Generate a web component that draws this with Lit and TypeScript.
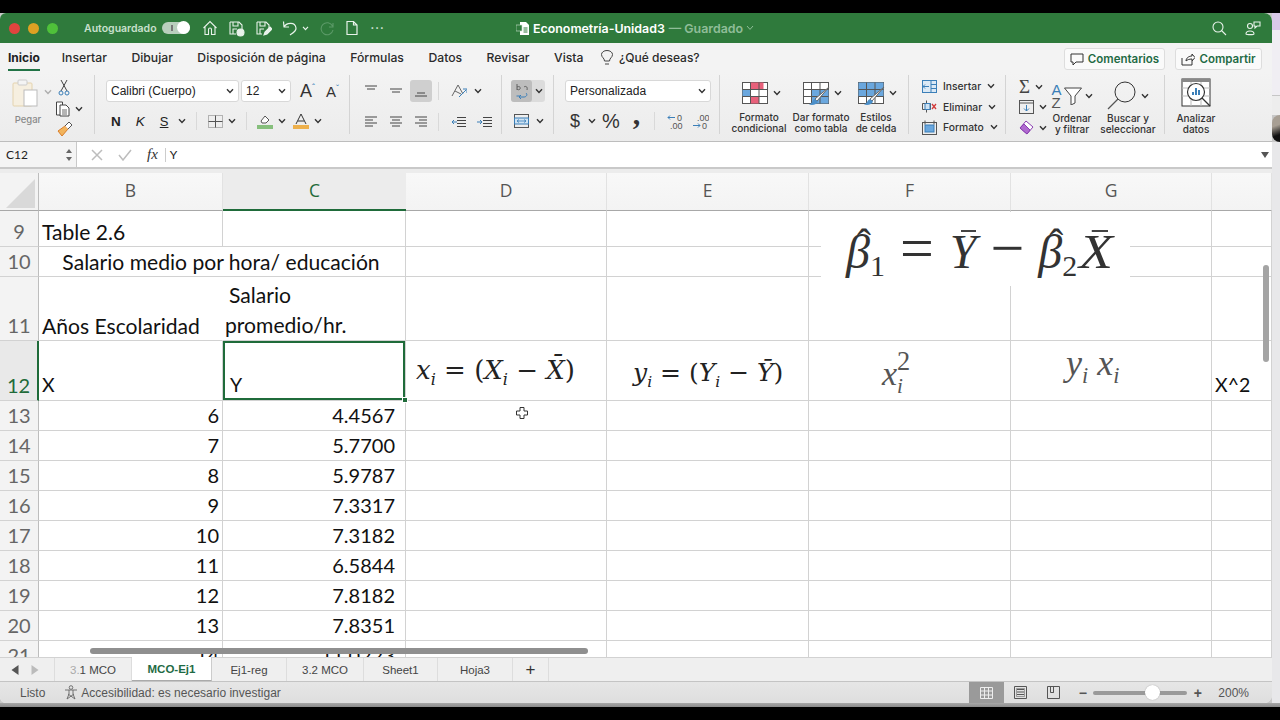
import { LitElement, html, css, svg } from "lit";
import { customElement } from "lit/decorators.js";

const chev = html`<svg class="chev" viewBox="0 0 8 6" width="8" height="6"><path d="M1 1.2 4 4.4 7 1.2" fill="none" stroke="#333" stroke-width="1.4"/></svg>`;
const ic = (w: number, h: number, body: unknown, vb?: string) =>
  html`<svg class="ic" width=${w} height=${h} viewBox=${vb ?? `0 0 ${w} ${h}`} fill="none" stroke="#444" stroke-width="1">${body}</svg>`;

const tableIcon = (fills: unknown, brush = false) => ic(28, 24, svg`
  <rect x="1.5" y="1.5" width="25" height="21" fill="#fff" stroke="#555"/>
  ${fills}
  <path d="M1.5 8.5h25M1.5 15.5h25M9.5 1.5v21M18 1.5v21" stroke="#555"/>
  ${brush ? svg`<path d="M27 6 15 20l-2-2Z" fill="#fff" stroke="#666"/><path d="M13 18c-3 1-2 4-6 5.5 4 1 8 0 9-3Z" fill="#4b8fc9" stroke="none"/>` : ""}
`);

@customElement("app-root")
export class AppRoot extends LitElement {
  static styles = css`
    :host { display: block; width: 1280px; height: 720px; background: #000; overflow: hidden; font-family: "Inter", "Liberation Sans", sans-serif; }
    svg { flex: none; display: block; }
    .stage { display: flex; flex-direction: column; height: 720px; padding: 13px 0; box-sizing: border-box; }
    .desk { flex: 1; min-height: 0; display: flex; background: #c8c8c8; }
    .foot { height: 4px; flex: none; background: linear-gradient(#a8a8a8, #8a8a8a); }
    .window { width: 1272px; display: flex; flex-direction: column; background: #f1f1f1; border-radius: 6px 8px 8px 6px; overflow: hidden; flex: none; }
    .strip { flex: 1; display: flex; flex-direction: column; }
    .s1 { height: 17px; background: #d9c9e8; }
    .s2 { height: 65px; background: #f0eef3; border-bottom: 1px solid #c6c6c6; }
    .s2b { height: 19px; background: #ededed; }
    .s3 { height: 27px; background: linear-gradient(160deg, #a89f94 40%, #111 75%); border-radius: 12px 0 0 12px; }
    .s4 { flex: 1; background: #e8e8ea; }

    .title { height: 30px; flex: none; background: #2f7a3c; color: #fff; display: flex; align-items: center; position: relative; }
    .lights { display: flex; gap: 8px; margin-left: 9px; }
    .lights i { width: 11px; height: 11px; border-radius: 50%; display: block; }
    .red { background: #e0443e; } .yellow { background: #dea123; } .green { background: #4fc13a; }
    .auto { margin-left: 26px; color: #c9e0cd; font-weight: 600; font-size: 10.5px; }
    .toggle { width: 28px; height: 12px; border-radius: 7px; background: #b9cfbd; margin-left: 5px; position: relative; display: flex; align-items: center; }
    .toggle::before { content: ""; width: 2px; height: 6px; background: #777; margin-left: 9px; }
    .toggle::after { content: ""; position: absolute; right: 0; top: -1px; width: 13px; height: 13px; border-radius: 50%; background: #fff; }
    .qat { display: flex; align-items: center; gap: 10px; margin-left: 12px; }
    .qat .small { margin-left: -6px; }
    .dots { letter-spacing: 1px; font-weight: 700; font-size: 11px; margin-left: 2px; color: #dcebdf; }
    .doc { position: absolute; left: 516px; top: 0; height: 30px; display: flex; align-items: center; gap: 3px; font-size: 12.4px; font-weight: 600; white-space: nowrap; }
    .doc span { color: #8fbd98; margin-left: 1px; }
    .tright { margin-left: auto; display: flex; gap: 18px; margin-right: 11px; align-items: center; }

    .tabs { height: 29px; flex: none; display: flex; align-items: center; font-size: 12.2px; color: #2b2b2b; font-weight: 500; padding-left: 8px; background: #f3f3f3; }
    .tab { margin-right: 24.5px; position: relative; white-space: nowrap; }
    .tab.on { font-weight: 700; color: #222; margin-right: 22px; font-size: 12px; }
    .tab.on::after { content: ""; position: absolute; left: 0; right: 0; bottom: -6px; height: 2px; background: #217346; }
    .tell { display: flex; align-items: center; gap: 5px; margin-left: -8px; font-size: 12px; }
    .actions { margin-left: auto; display: flex; gap: 10px; margin-right: 10px; margin-top: 3px; }
    .act { height: 22px; box-sizing: border-box; background: #fafafa; border: 1px solid #ddd; border-radius: 3px; display: flex; align-items: center; justify-content: center; gap: 4px; color: #1f6b45; font-weight: 600; font-size: 11.5px; }
    .act.a1 { width: 101px; } .act.a2 { width: 87px; }

    .ribbon { height: 70px; flex: none; display: flex; background: linear-gradient(#f3f3f3, #ececec); border-bottom: 1px solid #bdbdbd; box-sizing: border-box; padding-top: 3px; font-size: 10px; color: #333; }
    .g { flex: none; box-sizing: border-box; border-right: 1px solid #d4d4d4; margin-bottom: 7px; display: flex; }
    .col { display: flex; flex-direction: column; flex: none; }
    .col > * { flex: none; }
    .r { display: flex; align-items: center; flex: none; }
    .box { background: #fff; border: 1px solid #d8d8d8; border-radius: 3px; height: 22px; box-sizing: border-box; display: flex; align-items: center; justify-content: space-between; padding: 0 4px; font-size: 12px; font-family: "Liberation Sans", sans-serif; color: #222; }
    .sep { width: 1px; height: 18px; background: #d9d9d9; flex: none; }
    .lbl { text-align: center; line-height: 11px; font-size: 10px; font-weight: 500; color: #333; white-space: nowrap; }
    .lg { display: flex; flex-direction: column; align-items: center; flex: none; }
    .lg > * { flex: none; }
    .fb { font-size: 13.5px; font-weight: 700; font-family: "Liberation Sans", sans-serif; color: #222; }
    .fb.i { font-weight: 400; font-style: italic; }
    .fb.u { font-weight: 400; text-decoration: underline; font-size: 13px; }

    /* clipboard */
    .g-clip { width: 95px; }
    .paste { margin: 4px 0 0 11px; width: 30px; }
    .paste .lbl { color: #8a8a8a; margin: 7px 0 0 4px; font-size: 9.5px; }
    .chev-faint { margin: 14px 0 0 3px; opacity: .35; }
    .clip-col { margin: 2px 0 0 3px; }
    .scis { height: 21px; margin-left: 3px; display: flex; align-items: center; }
    .copy { height: 21px; gap: 4px; }
    .brush { height: 20px; margin-left: 1px; display: flex; align-items: center; }

    /* font */
    .g-font { width: 255px; flex-direction: column; padding: 5px 0 0 11px; }
    .font-top { gap: 2px; }
    .b-font { width: 133px; } .b-size { width: 50px; }
    .grow { font: 400 18px "Liberation Sans", sans-serif; margin-left: 7px; color: #333; }
    .shrink { font: 400 15px "Liberation Sans", sans-serif; margin-left: 9px; color: #333; }
    .grow sup, .shrink sup { font-size: 9px; line-height: 0; color: #3b7fb8; }
    .font-bot { margin-top: 8px; height: 22px; }
    .f-n { margin-left: 5px; } .f-k { margin-left: 15px; } .f-s { margin-left: 15px; }
    .f-c1 { margin-left: 10px; }
    .f-sep1 { margin: 0 11px 0 10px; }
    .f-c2 { margin-left: 5px; }
    .f-sep2 { margin: 0 10px 0 10px; }
    .f-c3 { margin-left: 5px; } .f-a { margin-left: 7px; } .f-c4 { margin-left: 5px; }

    /* alignment */
    .g-align { width: 152px; flex-direction: column; padding: 5px 0 0 10px; }
    .al { display: flex; width: 22px; height: 18px; align-items: center; justify-content: center; }
    .al.sel { height: 22px; background: #cfcfcf; border-radius: 3px; }
    .al-r1 { height: 22px; gap: 3px; }
    .al-r2 { height: 22px; gap: 3px; margin-top: 9px; }
    .al-sep { margin: 0 10px 0 3px; }
    .al-sep1 { margin: 0 7px 0 3px; }
    .al-c { margin-left: 4px; }
    .al-ind { margin-left: 7px; }

    /* wrap */
    .g-wrap { width: 52px; flex-direction: column; padding: 5px 0 0 9px; }
    .wrapbtn { height: 22px; width: 34px; background: #dcdcdc; border-radius: 3px; }
    .wrapsel { display: flex; width: 21px; height: 22px; align-items: center; justify-content: center; background: #bdbdbd; border-radius: 3px; }
    .wrapbtn .chev { margin-left: 3px; }
    .merge { height: 22px; margin-top: 8px; margin-left: 3px; gap: 7px; }

    /* number */
    .g-num { width: 166px; flex-direction: column; padding: 5px 0 0 11px; }
    .b-num { width: 146px; }
    .num-r { height: 24px; margin-top: 7px; }
    .dollar { font: 400 18px "Liberation Sans", sans-serif; margin-left: 5px; color: #333; }
    .n-c { margin-left: 8px; }
    .pct-b { font: 400 20px "Liberation Sans", sans-serif; margin-left: 6px; color: #333; }
    .comma { font: 700 30px/24px "Liberation Serif", serif; margin-left: 13px; color: #333; height: 24px; overflow: visible; position: relative; top: -7px; }
    .n-sep { margin: 0 12px 0 14px; }
    .dec2 { margin-left: 8px; }
    .dtext { font-family: "Liberation Sans", sans-serif; font-size: 9px; fill: #555; stroke: none; }

    /* styles */
    .g-sty { width: 189px; }
    .sty { padding-top: 6px; }
    .sty .lbl { margin-top: 7px; }
    .sty1 { width: 62px; margin-left: 8px; } .sty2 { width: 62px; } .sty3 { width: 48px; }
    .sty .r { gap: 4px; }
    .sty1 .r { margin-left: 4px; } .sty2 .r, .sty3 .r { margin-left: 2px; }

    /* cells */
    .g-cells { width: 97px; flex-direction: column; padding: 1px 0 0 13px; }
    .cell-item { height: 20.5px; gap: 6px; font-size: 10.3px; font-weight: 500; }

    /* edit */
    .g-edit { width: 159px; }
    .e-col { margin: 3px 0 0 13px; gap: 3.5px; width: 29px; }
    .e-i { gap: 5px; height: 17px; }
    .sigma { font: 400 19px "Liberation Serif", serif; color: #444; }
    .e-sort { width: 48px; margin-top: 3px; }
    .e-find { width: 58px; margin: 3px 0 0 3px; }
    .e-top { height: 35px; }
    .e-sort .e-top { gap: 2px; } .e-find .e-top { gap: 4px; }
    .e-sort .e-top .chev { margin-left: 1px; }
    .az { font: 400 15px/13px "Liberation Sans", sans-serif; color: #555; }
    .az i { color: #3b7fb8; font-style: normal; }

    /* analyze */
    .g-an { width: 60px; border: none; padding: 3px 0 0 12px; }
    .an { width: 38px; }
    .an .lbl { margin-top: 5px; }

    .formula { height: 25px; flex: none; background: #fff; display: flex; align-items: center; border-bottom: 2px solid #c9c9c9; font-family: "Lato", sans-serif; font-size: 12px; color: #222; }
    .ref { width: 77px; height: 100%; box-sizing: border-box; border-right: 1px solid #c9c9c9; display: flex; align-items: center; justify-content: space-between; padding: 0 3px 0 6px; background: #f4f4f4; }
    .x { margin-left: 14px; } .v-i { margin-left: 15px; }
    .fx { font-family: "Liberation Serif", serif; font-style: italic; font-size: 15px; color: #333; margin-left: 15px; }
    .fxsep { width: 1px; height: 14px; background: #ccc; margin: 0 4px 0 7px; }
    .fdrop { margin-left: auto; margin-right: 3px; }
    .band { height: 4px; flex: none; background: #ececec; }

    .sheet { flex: 1; min-height: 0; position: relative; background: #fff; overflow: hidden; font-family: "Lato", "Carlito", sans-serif; color: #111; }
    .row { display: grid; grid-template-columns: 39px 184px 183px 201px 202px 202px 201px 60px; }
    .h36 { height: 36px; } .h30 { height: 30px; } .h64 { height: 64px; } .h60 { height: 60px; }
    .row > div { border-right: 1px solid #d2d2d2; border-bottom: 1px solid #d2d2d2; box-sizing: border-box; display: flex; align-items: flex-end; padding: 0 3px 1px; font-size: 21.1px; line-height: 26px; white-space: nowrap; min-width: 0; }
    .row .rh { background: #f3f3f3; color: #666; justify-content: center; padding: 0 0 2px; border-right: 1px solid #bdbdbd; font-size: 20px; }
    .row .num { justify-content: flex-end; padding: 0 10px 2px 3px; font-size: 20px; }
    .row .num.b { padding-right: 3px; }
    .row .tiny { font-size: 19.5px; padding-bottom: 2px; }
    .head { height: 38px; background: linear-gradient(#f8f8f8, #f3f3f3); }
    .head > div { align-items: center !important; justify-content: center; padding: 0 0 3px !important; font-family: "Open Sans", sans-serif; font-size: 17.5px !important; color: #555; border-right-color: #e2e2e2 !important; border-bottom: 1px solid #a8a8a8 !important; }
    .head .corner { background: #f3f3f3; border-right: 1px solid #bdbdbd !important; padding: 0 !important; }
    .head .cur { background: #ececec; color: #1f6b3a; border-bottom: 2px solid #1f6b3a !important; border-right: none !important; }
    .row .rh.on { color: #1f6b3a; background: #e9e9e9; border-right: 2px solid #1f6b3a; }
    .row .cursel { box-shadow: inset 0 0 0 2px #1f6b3a; position: relative; overflow: visible; padding-left: 7px; padding-bottom: 2px; font-size: 19.5px; }
    .handle { position: absolute; right: -3px; bottom: -3px; background: #1f6b3a; border: 1px solid #fff; width: 4px; height: 4px; z-index: 2; }
    .nob { border-right-color: transparent !important; }
    .merged { grid-column: span 2; justify-content: center; padding-right: 5px !important; }
    .row .two { flex-direction: column; align-items: flex-start; justify-content: flex-end; line-height: 30px; padding: 0 0 0 2px; }
    .two span:first-child { padding-left: 4px; }

    .math { position: absolute; font-family: "DejaVu Serif", serif; color: #222; white-space: nowrap; font-style: italic; }
    .math sub { font-size: 62%; line-height: 0; }
    .up { font-style: normal; }
    .m1 { left: 416px; top: 182px; font-size: 26px; }
    .m2 { left: 633px; top: 185px; font-size: 25px; }
    .m3, .m4 { font-family: "Liberation Serif", serif; color: #555; }
    .m3 { left: 882px; top: 176px; font-size: 34px; display: flex; align-items: center; }
    .stack { display: flex; flex-direction: column; font-size: 62%; line-height: 25px; margin-left: 0; }
    .stack .up { font-size: 125%; }
    .m4 { left: 1066px; top: 169px; font-size: 36px; }
    .pic { position: absolute; left: 821px; top: 39px; width: 309px; height: 74px; box-sizing: border-box; padding-left: 25px; background: #fff; display: flex; align-items: baseline; font-family: "Liberation Serif", serif; font-style: italic; font-size: 48px; color: #333; white-space: nowrap; line-height: 72px; }
    .pic sub { font-size: 30px; line-height: 0; font-style: normal; vertical-align: baseline; position: relative; top: 8px; }
    .op { font-style: normal; font-size: 60px; }
    .eq { margin-left: 15px; } .mi { margin-left: 14px; } .yb { margin-left: 16px; } .b2 { margin-left: 14px; } .xb { margin-left: 2px; transform: scaleX(1.16); transform-origin: left center; }
    .hat { position: relative; display: inline-block; }
    .caret::before { content: "ˆ"; font-style: normal; position: absolute; left: 11px; top: -8px; font-size: 42px; }
    .barred::before { content: ""; position: absolute; left: 11px; top: 14px; width: 15px; height: 2px; background: #444; }
    .xb.barred::before { left: 11px; width: 14px; }
    .hscroll { position: absolute; left: 90px; top: 475px; width: 498px; height: 6px; border-radius: 3px; background: #8f8f8f; }
    .vscroll { position: absolute; left: 1263px; top: 92px; width: 6px; height: 97px; border-radius: 3px; background: #a4a4a4; }
    .cursor { position: absolute; left: 516px; top: 234px; }

    .sheets { height: 24px; flex: none; background: #efefef; display: flex; font-size: 11.5px; color: #444; border-top: 1px solid #d2d2d2; box-sizing: border-box; font-family: "Liberation Sans", sans-serif; }
    .nav { width: 55px; flex: none; display: flex; align-items: center; gap: 12px; padding-left: 11px; box-sizing: border-box; border-right: 1px solid #ddd; }
    .st { display: flex; align-items: center; justify-content: center; border-right: 1px solid #ddd; flex: none; box-sizing: border-box; }
    .st.on { background: #fff; color: #1f6b45; font-weight: 700; border-bottom: 1px solid #aaa; margin-top: -1px; border-right: 1px solid #ccc; }
    .st.plus { font-size: 17px; color: #333; }
    .faint { color: #aaa; }
    .status { height: 22px; flex: none; background: linear-gradient(#e6e6e6, #dedede); border-top: 1px solid #c4c4c4; box-sizing: border-box; display: flex; align-items: center; font-size: 12px; color: #555; padding-left: 20px; font-family: "Liberation Sans", sans-serif; }
    .acc { display: flex; align-items: center; gap: 3px; margin-left: 19px; }
    .views { margin-left: auto; display: flex; align-items: center; height: 100%; margin-right: 23px; }
    .v { width: 33px; height: 100%; display: flex; align-items: center; justify-content: center; }
    .v.on { background: #9a9a9a; width: 35px; margin-right: 0; }
    .slider { width: 94px; height: 4px; border-radius: 2px; background: #999; position: relative; margin: 0 6px; }
    .slider::after { content: ""; position: absolute; left: 52px; top: -6px; width: 15px; height: 15px; border-radius: 50%; background: #fff; box-shadow: 0 0 1px #888; }
    .pm { font-size: 14px; font-weight: 700; color: #555; width: 9px; text-align: center; }
    .pm.minus { margin-left: 8px; }
    .pct { margin-left: 16px; color: #555; }
  `;

  private qat() {
    const w = "#e8f2ea";
    return html`<div class="qat">
      <svg width="16" height="16" viewBox="0 0 16 16" fill="none" stroke=${w} stroke-width="1.1"><path d="M1.5 8 8 1.5 14.5 8M3 7v7.5h3.5V9.5a1.5 1.5 0 0 1 3 0v5H13V7"/></svg>
      <svg width="17" height="17" viewBox="0 0 17 17" fill="none" stroke=${w} stroke-width="1.1"><path d="M2 2h9l3 3v4M2 2v12h6M5 2v4h5V2M5 14V9h4"/><circle cx="12.5" cy="12.5" r="3.5" fill=${w}/></svg>
      <svg width="17" height="17" viewBox="0 0 17 17" fill="none" stroke=${w} stroke-width="1.1"><path d="M2 2h9l3 3v3M2 2v12h5M5 2v4h5V2M5 14V9h4"/><path d="M9 15l1-3 5-5 2 2-5 5Z" fill=${w}/></svg>
      <svg width="16" height="16" viewBox="0 0 16 16" fill="none" stroke=${w} stroke-width="1.2"><path d="M2 7 1.5 1.5M1.5 7H7M2 7c2-4 11-6 12 1 .4 3-3 5-6 7"/></svg>
      <svg class="small" width="7" height="5" viewBox="0 0 8 6"><path d="M1 1 4 4.4 7 1" fill="none" stroke=${w} stroke-width="1.4"/></svg>
      <svg width="16" height="16" viewBox="0 0 16 16" fill="none" stroke="#5c9a68" stroke-width="1.1"><path d="M14 3v4h-4M13.5 6A6 6 0 1 0 14 10"/></svg>
      <svg width="14" height="16" viewBox="0 0 14 16" fill="none" stroke=${w} stroke-width="1.2"><path d="M2 1.5h6.5l3.5 3.5v9.5H2ZM8.5 1.5V5H12"/></svg>
      <span class="dots">···</span>
    </div>`;
  }

  private clipboard() {
    return html`<div class="g g-clip">
      <div class="lg paste">
        ${ic(28, 28, svg`<rect x="1" y="4" width="19" height="23" rx="1" fill="#f6efe0" stroke="#e4d3ae"/><rect x="6" y="1" width="9" height="5" rx="1" fill="#f4f4f4" stroke="#ccc"/><rect x="12" y="11" width="13" height="16" fill="#fff" stroke="#bbb"/>`)}
        <span class="lbl">Pegar</span>
      </div>
      <span class="chev-faint">${chev}</span>
      <div class="col clip-col">
        <div class="scis">${ic(12, 17, svg`<path d="M3 1l6 11M9 1 3 12" stroke="#444"/><circle cx="3" cy="14" r="2" stroke="#3b7fb8"/><circle cx="9" cy="14" r="2" stroke="#3b7fb8"/>`)}</div>
        <div class="r copy">${ic(16, 16, svg`<path d="M1.5 1h6v13h-6Z" fill="#fff"/><path d="M5 4h6l3 3v8H5Z" fill="#fff"/><path d="M7 9h5M7 11h5M7 13h5" stroke-width=".8"/>`)}${chev}</div>
        <div class="brush">${ic(17, 17, svg`<path d="M2 10l7-5 3 3-6 7Z" fill="#f2b45c" stroke="#d97d2a"/><path d="M9 5l4-4 3 3-4 4" fill="#fff" stroke="#555"/>`)}</div>
      </div>
    </div>`;
  }

  private font() {
    return html`<div class="g g-font">
      <div class="r font-top">
        <div class="box b-font">Calibri (Cuerpo)${chev}</div>
        <div class="box b-size">12${chev}</div>
        <span class="grow">A<sup>ˆ</sup></span>
        <span class="shrink">A<sup>ˇ</sup></span>
      </div>
      <div class="r font-bot">
        <span class="fb f-n">N</span>
        <span class="fb i f-k">K</span>
        <span class="fb u f-s">S</span>
        <span class="f-c1">${chev}</span>
        <div class="sep f-sep1"></div>
        ${ic(15, 15, svg`<rect x=".5" y="1.5" width="14" height="12" stroke="#777" stroke-dasharray="1 1"/><path d="M7.5 1.5v12M.5 7.5h14" stroke="#555"/>`)}
        <span class="f-c2">${chev}</span>
        <div class="sep f-sep2"></div>
        ${ic(16, 17, svg`<path d="M4 8l4-5 4 4-3 3H5Z" fill="#fff" stroke="#555"/><rect y="12" width="16" height="4" fill="#86bf7c" stroke="none"/>`)}
        <span class="f-c3">${chev}</span>
        <span class="f-a">${ic(16, 17, svg`<path d="M3 11 8 1l5 10M5 8h6" stroke="#333"/><rect y="12" width="16" height="4" fill="#edb04c" stroke="none"/>`)}</span>
        <span class="f-c4">${chev}</span>
      </div>
    </div>`;
  }

  private lines(rows: number[][], sel = false) {
    return html`<span class="al ${sel ? "sel" : ""}">
      <svg width="14" height="12" viewBox="0 0 14 12" stroke="#444" stroke-width="1">${rows.map(([y, a, b]) => svg`<path d="M${a} ${y}H${b}"/>`)}</svg></span>`;
  }

  private align() {
    const top = [[1, 1, 13], [4, 3, 11]];
    const mid = [[4, 1, 13], [7, 3, 11]];
    const bot = [[8, 3, 11], [11, 1, 13]];
    const l = [[1, 1, 13], [4, 1, 9], [7, 1, 13], [10, 1, 9]];
    const c = [[1, 1, 13], [4, 3, 11], [7, 1, 13], [10, 3, 11]];
    const rr = [[1, 1, 13], [4, 5, 13], [7, 1, 13], [10, 5, 13]];
    return html`<div class="g g-align">
      <div class="r al-r1">
        ${this.lines(top)}${this.lines(mid)}${this.lines(bot, true)}
        <div class="sep al-sep1"></div>
        ${ic(18, 16, svg`<path d="M3 13 9 2l5 9M6 8l6 3" stroke="#666"/><path d="M10 14 17 7M14 6h4v4" stroke="#3b7fb8"/>`)}
        <span class="al-c">${chev}</span>
      </div>
      <div class="r al-r2">
        ${this.lines(l)}${this.lines(c)}${this.lines(rr)}
        <div class="sep al-sep"></div>
        ${ic(15, 12, svg`<path d="M5 1.5h9M5 4.5h9M5 7.5h9M5 10.5h9"/><path d="M5 6H0M2 4 0 6l2 2" stroke="#3b7fb8"/>`)}
        <span class="al-ind">${ic(15, 12, svg`<path d="M6 1.5h9M6 4.5h9M6 7.5h9M6 10.5h9"/><path d="M0 6h5M3 4l2 2-2 2" stroke="#3b7fb8"/>`)}</span>
      </div>
    </div>`;
  }

  private wrap() {
    return html`<div class="g g-wrap">
      <div class="r wrapbtn">
        <span class="wrapsel">${ic(16, 17, svg`<path d="M3 7V1M3 4c2-1 4 0 3 2-1 1-2 1-3 0M10 4c1-1 4-1 3 3" stroke="#555" stroke-width=".9"/><path d="M6 13H2.5M12 10c2 2 0 4-2 4H5M7 12l-2 2 2 2" stroke="#3b7fb8"/>`)}</span>
        ${chev}
      </div>
      <div class="r merge">
        ${ic(15, 16, svg`<rect x=".5" y="1.5" width="14" height="13" stroke="#555"/><rect x=".5" y="5" width="14" height="6" fill="#cfe3f3" stroke="#3b7fb8"/><path d="M3 8h9M3 8l2-1.5M3 8l2 1.5M12 8l-2-1.5M12 8l-2 1.5" stroke="#3b7fb8" stroke-width=".8"/>`)}${chev}
      </div>
    </div>`;
  }

  private number() {
    return html`<div class="g g-num">
      <div class="box b-num">Personalizada${chev}</div>
      <div class="r num-r">
        <span class="dollar">$</span>
        <span class="n-c">${chev}</span>
        <span class="pct-b">%</span>
        <span class="comma">,</span>
        <div class="sep n-sep"></div>
        ${ic(17, 17, svg`<path d="M8 4.5H1M3 2.5l-2 2 2 2" stroke="#3b7fb8"/><text class="dtext" x="10" y="8">0</text><text class="dtext" x="3" y="16">.00</text>`)}
        <span class="dec2">${ic(17, 17, svg`<text class="dtext" x="5" y="8">.00</text><path d="M1 12.5h7M6 10.5l2 2-2 2" stroke="#3b7fb8"/><text class="dtext" x="10" y="16">0</text>`)}</span>
      </div>
    </div>`;
  }

  private styles_() {
    const cf = svg`<rect x="9.5" y="1.5" width="13" height="7" fill="#e8607a" stroke="none"/><rect x="1.5" y="8.5" width="8" height="7" fill="#6aa7de" stroke="none"/><rect x="9.5" y="15.5" width="8.5" height="7" fill="#e8607a" stroke="none"/>`;
    const tb = svg`<rect x="9.5" y="8.5" width="17" height="14" fill="#6aa7de" stroke="none"/>`;
    const st = svg`<rect x="1.5" y="1.5" width="25" height="14" fill="#6aa7de" stroke="none"/>`;
    return html`<div class="g g-sty">
      <div class="lg sty sty1"><div class="r">${tableIcon(cf)}${chev}</div><span class="lbl">Formato<br>condicional</span></div>
      <div class="lg sty sty2"><div class="r">${tableIcon(tb, true)}${chev}</div><span class="lbl">Dar formato<br>como tabla</span></div>
      <div class="lg sty sty3"><div class="r">${tableIcon(st, true)}${chev}</div><span class="lbl">Estilos<br>de celda</span></div>
    </div>`;
  }

  private cells() {
    const item = (icon: unknown, t: string) => html`<div class="r cell-item">${icon}<span>${t}</span>${chev}</div>`;
    return html`<div class="g g-cells">
      ${item(ic(15, 13, svg`<rect x=".5" y=".5" width="14" height="12" stroke="#3b7fb8" fill="#dbe9f5"/><path d="M9 .5v12M9 4.5h5.5M9 8.5h5.5M1 6.5h6M3 4.5l-2 2 2 2" stroke="#3b7fb8"/>`), "Insertar")}
      ${item(ic(15, 13, svg`<path d="M.5 3.5h8v6h-8ZM4.5 .5v12" stroke="#555"/><rect x="3" y="3.5" width="5" height="6" fill="#cfe3f3" stroke="#3b7fb8"/><path d="M10 4l4 5M14 4l-4 5" stroke="#d23a3a" stroke-width="1.3"/>`), "Eliminar")}
      ${item(ic(15, 15, svg`<rect x=".5" y="2.5" width="14" height="12" stroke="#555"/><rect x="3" y="5" width="9" height="7" fill="#6aa7de" stroke="#3b7fb8"/><path d="M3 .5v4M12 .5v4" stroke="#555"/>`), "Formato")}
    </div>`;
  }

  private edit() {
    return html`<div class="g g-edit">
      <div class="col e-col">
        <div class="r e-i"><span class="sigma">Σ</span>${chev}</div>
        <div class="r e-i">${ic(15, 14, svg`<rect x=".5" y=".5" width="14" height="13" stroke="#555"/><path d="M.5 3h14" stroke="#555"/><path d="M7.5 5v6M5 8.5l2.5 2.5L10 8.5" stroke="#3b7fb8"/>`)}${chev}</div>
        <div class="r e-i">${ic(15, 15, svg`<path d="M1 8l6-7 7 6-6 7Z" fill="#fff" stroke="#8a3fb0"/><path d="M1 8l4-4 6 6-3 4Z" fill="#b06ad0" stroke="#8a3fb0"/>`)}${chev}</div>
      </div>
      <div class="lg e-sort">
        <div class="r e-top">
          <span class="az"><i>A</i><br>Z</span>
          ${ic(18, 18, svg`<path d="M.5 1h17L11 9v7l-4 2V9Z" stroke="#444" fill="#fff"/>`)}
          ${chev}
        </div>
        <span class="lbl">Ordenar<br>y filtrar</span>
      </div>
      <div class="lg e-find">
        <div class="r e-top">
          ${ic(30, 30, svg`<circle cx="18" cy="11" r="10" stroke="#333"/><path d="M11 18 1 28" stroke="#555" stroke-width="1.2"/>`)}${chev}
        </div>
        <span class="lbl">Buscar y<br>seleccionar</span>
      </div>
    </div>`;
  }

  private analyze() {
    return html`<div class="g g-an">
      <div class="lg an">
        ${ic(30, 30, svg`<rect x="1" y="1" width="28" height="27" stroke="#333" fill="#fff"/><rect x="1" y="1" width="28" height="3" fill="#888" stroke="none"/><path d="M1 10h28M1 18h28M10 4v24M20 4v24" stroke="#bbb"/><circle cx="15" cy="14" r="8.5" fill="#fff" stroke="#333" stroke-width="1.2"/><path d="M11 17v-3h2v3ZM14 17v-7h2v7ZM17 17v-5h2v5Z" fill="#3b7fb8" stroke="none"/><path d="M21 20l8 8" stroke="#333" stroke-width="1.2"/>`)}
        <span class="lbl">Analizar<br>datos</span>
      </div>
    </div>`;
  }

  private sheet() {
    const cols = ["B", "C", "D", "E", "F", "G", ""];
    const blanks = (k: number) => Array.from({ length: k }, () => html`<div></div>`);
    const data: [number, string, string][] = [
      [13, "6", "4.4567"], [14, "7", "5.7700"], [15, "8", "5.9787"], [16, "9", "7.3317"],
      [17, "10", "7.3182"], [18, "11", "6.5844"], [19, "12", "7.8182"], [20, "13", "7.8351"], [21, "14", "11.0223"],
    ];
    return html`<div class="sheet">
      <div class="row head">
        <div class="corner"><svg width="32" height="32" viewBox="0 0 32 32"><path d="M32 3v29H3Z" fill="#d9d9d9"/></svg></div>
        ${cols.map((c) => html`<div class=${c === "C" ? "cur" : ""}>${c}</div>`)}
      </div>
      <div class="row h36"><div class="rh">9</div><div>Table 2.6</div>${blanks(6)}</div>
      <div class="row h30"><div class="rh">10</div><div class="merged">Salario medio por hora/ educación</div>${blanks(5)}</div>
      <div class="row h64"><div class="rh">11</div><div class="nob">Años Escolaridad</div><div class="two"><span>Salario</span><span>promedio/hr.</span></div>${blanks(5)}</div>
      <div class="row h60"><div class="rh on">12</div><div class="tiny">X</div><div class="cursel">Y<span class="handle"></span></div><div></div><div></div><div></div><div></div><div class="tiny">X^2</div></div>
      ${data.map(([n, a, b]) => html`<div class="row h30"><div class="rh">${n}</div><div class="num b">${a}</div><div class="num">${b}</div>${blanks(5)}</div>`)}
      <div class="math m1">x<sub>i</sub> <span class="up">= (</span>X<sub>i</sub> <span class="up">−</span> X̄<span class="up">)</span></div>
      <div class="math m2">y<sub>i</sub> <span class="up">= (</span>Y<sub>i</sub> <span class="up">−</span> Ȳ<span class="up">)</span></div>
      <div class="math m3">x<span class="stack"><span class="up">2</span><span>i</span></span></div>
      <div class="math m4">y<sub>i</sub> x<sub>i</sub></div>
      <div class="pic"><span class="hat caret">β</span><sub>1</sub><span class="op eq">=</span><span class="hat barred yb">Y</span><span class="op mi">−</span><span class="hat caret b2">β</span><sub>2</sub><span class="hat barred xb">X</span></div>
      <div class="hscroll"></div>
      <div class="vscroll"></div>
      <svg class="cursor" width="12" height="12" viewBox="0 0 12 12"><path d="M4 .5h4v3.5h3.5v4H8v3.5H4V8H.5V4H4Z" fill="#fff" stroke="#333"/></svg>
    </div>`;
  }

  render() {
    const tabs: [string, number, boolean?][] = [
      ["3.1 MCO", 77], ["MCO-Ej1", 80, true], ["Ej1-reg", 75], ["3.2 MCO", 77], ["Sheet1", 74], ["Hoja3", 75],
    ];
    return html`<div class="stage"><div class="desk"><div class="window">
      <div class="title">
        <div class="lights"><i class="red"></i><i class="yellow"></i><i class="green"></i></div>
        <span class="auto">Autoguardado</span><span class="toggle"></span>
        ${this.qat()}
        <div class="doc">
          <svg width="14" height="15" viewBox="0 0 14 15"><path d="M4 1h6l3 3v10H4Z" fill="#fff"/><rect x="0" y="4" width="6" height="6" fill="#2f7a3c" stroke="#cfe5d4" stroke-width=".6"/><path d="M7.5 7h4M7.5 9h4M7.5 11h4" stroke="#2f7a3c"/></svg>
          Econometría-Unidad3 <span>— Guardado</span>
          <svg width="8" height="6" viewBox="0 0 8 6"><path d="M1 1 4 4.4 7 1" fill="none" stroke="#8fbd98" stroke-width="1"/></svg>
        </div>
        <div class="tright">
          <svg width="15" height="15" viewBox="0 0 15 15" fill="none" stroke="#e8f2ea" stroke-width="1.1"><circle cx="6" cy="6" r="5"/><path d="M9.5 9.5 14 14"/></svg>
          <svg width="16" height="15" viewBox="0 0 16 15" fill="none" stroke="#e8f2ea" stroke-width="1.1"><circle cx="5" cy="5" r="2.5"/><path d="M1 13c0-4 8-4 8 0 0 1-8 1-8 0Z"/><path d="M9 1h6v4h-3l-2 2V5H9Z"/></svg>
        </div>
      </div>
      <div class="tabs">
        <span class="tab on">Inicio</span><span class="tab">Insertar</span><span class="tab">Dibujar</span><span class="tab">Disposición de página</span><span class="tab">Fórmulas</span><span class="tab">Datos</span><span class="tab">Revisar</span><span class="tab">Vista</span>
        <span class="tell"><svg width="14" height="16" viewBox="0 0 14 16" fill="none" stroke="#444"><path d="M4.5 11c0-3-3-3.5-3-6.5a5.5 4 0 0 1 11 0c0 3-3 3.5-3 6.5ZM5 14h4"/></svg>¿Qué deseas?</span>
        <div class="actions">
          <span class="act a1"><svg width="14" height="13" viewBox="0 0 14 13" fill="none" stroke="#333"><path d="M1 1h12v8H6l-3 3V9H1Z"/></svg>Comentarios</span>
          <span class="act a2"><svg width="14" height="13" viewBox="0 0 14 13" fill="none" stroke="#333"><path d="M1 5v7h10V8M5 8c0-3 3-5 6-5V1l3 3.5L11 8V6C8 6 6 7 5 8Z"/></svg>Compartir</span>
        </div>
      </div>
      <div class="ribbon">
        ${this.clipboard()}${this.font()}${this.align()}${this.wrap()}${this.number()}${this.styles_()}${this.cells()}${this.edit()}${this.analyze()}
      </div>
      <div class="formula">
        <div class="ref"><span>C12</span><svg width="8" height="14" viewBox="0 0 8 14" fill="#666"><path d="M4 1 7 5H1ZM4 13 1 9h6Z"/></svg></div>
        <svg class="x" width="12" height="12" viewBox="0 0 12 12" stroke="#bdbdbd" stroke-width="1.5" fill="none"><path d="M1 1l10 10M11 1 1 11"/></svg>
        <svg class="v-i" width="14" height="12" viewBox="0 0 14 12" stroke="#bdbdbd" stroke-width="1.5" fill="none"><path d="M1 6l4 5 8-10"/></svg>
        <span class="fx">fx</span>
        <span class="fxsep"></span>
        <span>Y</span>
        <svg class="fdrop" width="8" height="6" viewBox="0 0 8 6" fill="#555"><path d="M0 0h8L4 6Z"/></svg>
      </div>
      <div class="band"></div>
      ${this.sheet()}
      <div class="sheets">
        <div class="nav">
          <svg width="8" height="10" viewBox="0 0 7 10" fill="#555"><path d="M7 0v10L0 5Z"/></svg>
          <svg width="8" height="10" viewBox="0 0 7 10" fill="#bbb"><path d="M0 0v10l7-5Z"/></svg>
        </div>
        ${tabs.map(([t, w, on]) => html`<div class="st ${on ? "on" : ""}" style="width:${w}px">${t === "3.1 MCO" ? html`<span class="faint">3.</span>1 MCO` : t}</div>`)}
        <div class="st plus" style="width:36px">+</div>
      </div>
      <div class="status">
        <span>Listo</span>
        <span class="acc"><svg width="14" height="15" viewBox="0 0 14 15" fill="none" stroke="#666" stroke-width=".9"><circle cx="7" cy="2.5" r="1.8"/><path d="M1 5h12M5 5v4l-2 5M9 5v4l2 5M4 9l7 5M10 9l-7 5"/></svg>Accesibilidad: es necesario investigar</span>
        <div class="views">
          <div class="v on"><svg width="13" height="12" viewBox="0 0 13 12" fill="none" stroke="#eee"><path d="M.5.5h12v11H.5ZM.5 4h12M.5 8h12M4.5.5v11M8.5.5v11"/></svg></div>
          <div class="v"><svg width="13" height="13" viewBox="0 0 13 13" fill="none" stroke="#555"><path d="M.5.5h12v12H.5ZM3 3.5h7M3 6h7M3 8.5h7"/><path d="M2.5 2.5h8v8h-8Z" stroke-width=".5"/></svg></div>
          <div class="v"><svg width="13" height="13" viewBox="0 0 13 13" fill="none" stroke="#555"><path d="M.5.5h12v12H.5ZM3.5.5v6h3v-6M6.5.5v6"/></svg></div>
          <span class="pm minus">−</span>
          <div class="slider"></div>
          <span class="pm">+</span>
          <span class="pct">200%</span>
        </div>
      </div>
    </div>
    <div class="strip"><div class="s1"></div><div class="s2"></div><div class="s2b"></div><div class="s3"></div><div class="s4"></div></div>
    </div><div class="foot"></div></div>`;
  }
}
